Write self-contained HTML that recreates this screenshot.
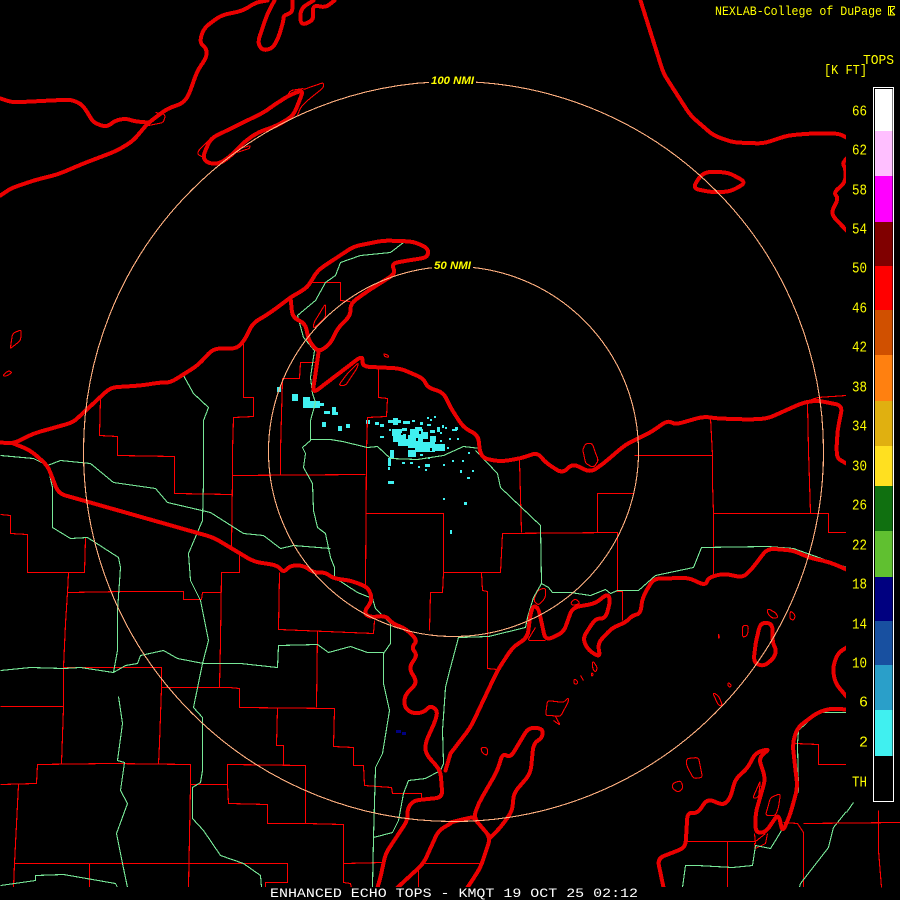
<!DOCTYPE html>
<html><head><meta charset="utf-8"><title>Enhanced Echo Tops KMQT</title>
<style>
html,body{margin:0;padding:0;background:#000;width:900px;height:900px;overflow:hidden}
svg{display:block}
.k{fill:none;stroke:#ea0000;stroke-width:4;stroke-linejoin:round;stroke-linecap:round}
.r{fill:none;stroke:#ff0000;stroke-width:1.1}
.g{fill:none;stroke:#78e898;stroke-width:1.1}
.c{fill:none;stroke:#ffb080;stroke-width:1.1}
.y{fill:#ffff00;font-family:"Liberation Mono",monospace;font-size:15px}
.y2{fill:#ffff00;font-family:"Liberation Mono",monospace;font-size:14px}
.n{fill:#ffff00;font-family:"Liberation Sans",sans-serif;font-size:11px;font-weight:bold;font-style:italic}
</style></head><body>
<svg width="900" height="900" viewBox="0 0 900 900" xmlns="http://www.w3.org/2000/svg">
<defs><clipPath id="m"><rect x="0" y="0" width="846" height="887"/></clipPath></defs>
<rect width="900" height="900" fill="#000"/>
<g clip-path="url(#m)">
<g shape-rendering="crispEdges">
<path fill="#40f0f0" d="M292 394h6v7h-6zM277 387h4v5h-4zM303 397h7v11h-7zM303 401h17v7h-17zM318 403h6v3h-6zM324 411h6v3h-6zM332 407h4v8h-4zM335 412h3v3h-3zM322 422h4v5h-4zM338 426h4v5h-4zM346 424h4v4h-4zM366 420h4v4h-4zM375 422h4v3h-4zM380 424h4v3h-4zM388 420h13v3h-13zM393 418h5v7h-5zM403 421h7v3h-7zM412 420h3v2h-3zM420 422h3v3h-3zM427 417h2v2h-2zM430 419h2v2h-2zM434 416h2v2h-2zM427 424h4v2h-4zM389 429h2v2h-2zM392 429h10v7h-10zM393 434h13v8h-13zM402 428h5v3h-5zM410 429h13v10h-13zM415 427h7v3h-7zM398 439h10v7h-10zM408 435h15v13h-15zM415 442h20v10h-20zM423 432h5v7h-5zM430 430h5v3h-5zM437 427h3v5h-3zM442 425h2v3h-2zM430 436h6v6h-6zM432 444h13v7h-13zM408 450h8v7h-8zM390 450h4v8h-4zM455 427h3v3h-3zM452 429h5v2h-5zM440 432h2v2h-2zM445 427h2v2h-2zM449 438h2v2h-2zM457 438h2v2h-2zM440 440h2v2h-2zM447 447h2v2h-2zM380 436h4v2h-4zM425 464h5v3h-5zM420 454h3v2h-3zM428 457h2v2h-2zM402 462h3v2h-3zM410 462h3v2h-3zM418 466h2v2h-2zM425 469h2v2h-2zM443 464h2v2h-2zM452 460h2v2h-2zM462 460h2v2h-2zM468 452h2v2h-2zM460 470h2v3h-2zM472 470h2v2h-2zM467 477h3v2h-3zM388 458h3v8h-3zM388 467h2v3h-2zM388 481h6v3h-6zM443 498h2v2h-2zM464 502h3v3h-3zM450 530h2v4h-2z"/>
<path fill="#000" d="M401 433h2v2h-2zM419 431h2v3h-2zM416 438h2v3h-2zM430 448h2v3h-2z"/>
<path fill="#000080" d="M396 730h5v3h-5zM402 732h4v3h-4z"/>
</g>

<g shape-rendering="crispEdges" transform="translate(.5 .5)">
<!-- county lines -->
<g class="r">
<polyline points="243,340 243,397 253,397 253,416 233,417 232,450 232,475 231,547"/>
<polyline points="100,397 99,435 117,436 117,455 174,456 174,493 231,494"/>
<polyline points="312,282 340,282 340,300 350,301"/>
<polyline points="317,362 300,362 299,378 282,378 280,450 280,474"/>
<polyline points="378,367 378,397 387,398 386,416 367,417 366,450 365,587"/>
<polyline points="232,475 365,474"/>
<polyline points="0,514 10,515 10,533 27,534 27,572 84,572 85,537"/>
<polyline points="68,572 67,592 65,623 63,667 63,707 61,763"/>
<polyline points="67,592 125,591 183,591 183,599 201,599 202,592 221,592"/>
<polyline points="239,555 239,572 221,572 220,640 219,687"/>
<polyline points="63,667 161,667 161,687 159,743 158,764"/>
<polyline points="161,687 229,687 239,688 239,707 334,708 333,746 353,747 353,765 363,765 364,785 391,787 392,793 421,793 421,798"/>
<polyline points="277,707 276,745 283,745 283,764"/>
<polyline points="0,706 63,706"/>
<polyline points="279,572 278,629 373,633 374,620"/>
<polyline points="317,630 316,707"/>
<polyline points="0,784 36,783 37,764 110,763 190,764 190,784 188,887"/>
<polyline points="18,784 14,863 13,887"/>
<polyline points="190,784 227,784 227,764 305,765 305,823 343,824 343,882 350,883 351,887"/>
<polyline points="227,784 228,803 267,804 267,823 305,823"/>
<polyline points="14,863 287,863 287,882 265,882 265,887"/>
<polyline points="89,863 89,887"/>
<polyline points="343,863 383,862"/>
<polyline points="418,870 418,887"/>
<polyline points="423,863 480,863"/>
<polyline points="365,513 443,513 443,572 442,592 430,592 429,630"/>
<polyline points="443,572 500,572 502,533 617,532 617,590"/>
<polyline points="519,460 521,532"/>
<polyline points="634,455 712,455 712,483 713,513 713,575"/>
<polyline points="710,417 712,455"/>
<polyline points="807,403 808,450 810,513"/>
<polyline points="597,532 597,493 634,493"/>
<polyline points="481,572 482,590 487,591 487,668 497,669"/>
<polyline points="616,591 622,591 622,620"/>
<polyline points="713,513 828,513 828,532 846,532"/>
<polyline points="795,743 818,744 818,764 846,764"/>
<polyline points="687,841 755,841 765,833"/>
<polyline points="727,841 727,887"/>
<polyline points="783,822 797,823 803,832 803,887"/>
<polyline points="754,833 755,843 754,843 755,848 765,843 767,833"/>
</g>
<!-- thin lake / island outlines -->
<g class="r s">
<polyline points="210,138 198,150 197,154 203,157"/>
<polyline points="243,147 250,145 249,148 233,153"/>
<polyline points="303,89 323,82 323,87 307,100 300,107 297,115"/>
<polyline points="287,95 290,90 303,88"/>
<polyline points="155,112 165,114 163,122 148,125"/>
<polyline points="803,402 817,397 846,395"/>
<polygon points="10,347 12,333 21,329 20,340 10,348"/>
<polygon points="2,375 8,370 12,372 5,376"/>
<polygon points="338,385 347,373 358,362 357,367 345,385"/>
<polygon points="313,323 325,303 325,317 313,328"/>
<polygon points="383,353 388,355 388,357 384,356"/>
<polygon points="582,450 585,443 592,443 594,450 598,460 593,467 585,463 583,452"/>
<polygon points="537,590 545,587 545,597 538,605 533,600"/>
<polygon points="570,602 575,598 580,603 572,605"/>
<polygon points="790,610 795,615 793,620 789,618"/>
<polygon points="767,608 775,612 778,617 772,618 767,613"/>
<polygon points="742,625 748,625 747,635 742,637"/>
<polygon points="718,633 719,637 718,638"/>
<polygon points="728,682 731,685 729,687 727,684"/>
<polygon points="712,692 718,695 722,705 718,705"/>
<polygon points="686,758 698,757 700,767 702,777 693,778 686,765"/>
<polygon points="672,783 680,780 683,787 678,792 672,788"/>
<polygon points="547,700 563,702 568,697 568,701 560,716 550,715 545,715"/>
<polygon points="592,660 597,667 595,672 592,668"/>
<polygon points="574,678 578,682 575,684 573,682"/>
<polyline points="580,675 583,680"/>
<polygon points="591,672 593,674 591,676"/>
<polygon points="480,747 487,747 487,755 482,753"/>
<polygon points="770,797 780,793 778,807 775,815 765,815"/>
<polygon points="760,780 752,798 758,797"/>
<polyline points="553,720 560,725 555,716"/>
<polyline points="535,627 527,640 545,640"/>
</g>

<!-- rivers / state -->
<g class="g">
<polyline points="403,242 390,252 360,255 340,262 335,275 325,282 315,300 297,315 303,337 314,350 310,377 312,393 315,402 310,420 310,440 302,447 305,453 303,467 312,483 313,510 317,527 325,533 330,557 334,567 334,577 357,592 372,598 375,608 390,623 390,643 383,653 383,683 389,710 382,753 375,767 373,837 372,887"/>
<polyline points="310,439 330,439 342,441 367,447 377,446 390,458 417,459 443,455 463,446 480,448"/>
<polyline points="475,450 497,473 500,487 540,525 541,583 533,597 527,617 525,627 488,636 458,637 450,667 445,687 442,730 443,763 440,770 425,778 408,780 403,793 398,820 392,832 373,837"/>
<polyline points="541,583 548,587 552,592 570,592 590,595 605,589 610,593 617,590 638,590 655,575 693,567 701,547 767,546 793,548 846,567"/>
<polyline points="846,712 817,712 798,730 797,743 798,790 787,820 775,840 770,848 755,845 752,865 732,867 697,865 685,865 682,887"/>
<polyline points="853,802 833,827 828,847 800,883 799,887"/>
<polyline points="0,455 33,458 47,465 60,460 90,463 113,482 155,488 167,502 210,512 243,533 263,535 280,548 293,545 330,548"/>
<polyline points="47,465 52,487 52,527 70,538 87,537 118,557 120,567 117,610 117,650 113,672"/>
<polyline points="0,670 30,667 63,668 80,667 113,672 125,665 137,663 140,655 163,650 177,658 203,663 240,663 277,667 278,645 317,644 328,652 350,646 367,652 383,652"/>
<polyline points="183,375 193,393 208,407 203,420 203,480 202,520 188,553 190,580 200,600 208,640 202,663 193,707 202,717 202,770 200,782 192,787 192,818 203,830 220,855 243,863 260,875 261,887"/>
<polyline points="118,696 122,723 117,760 124,762 120,790 127,803 116,833 122,863 127,887"/>
<polyline points="0,885 35,880 35,875 63,874 115,883 117,887"/>
</g>

<!-- thick coast lines -->
<g class="k s">
<polyline points="0,98 12,102 50,100 70,99 80,103 86,110 92,121 100,125 107,126 115,120 125,118 135,121 148,122"/>
<polyline points="0,195 10,188 33,180 57,174 83,163 117,150 133,140 147,123 167,108 182,103 188,95 197,70 206,57 206,48 199,42 203,28 220,15 243,10 255,2 267,0"/>
<polyline points="274,0 267,13 257,42 262,50 272,48 278,37 283,20 283,15 292,12 292,0"/>
<polyline points="334,0 325,7 315,5 312,8 313,20 300,25 300,8 313,0"/>
<polygon points="210,138 202,157 208,163 220,163 233,153 243,142 257,132 277,125 293,115 303,90 295,92 285,97 270,107 263,112"/>
<polyline points="0,442 13,443 33,433 72,422 80,415 110,387 140,385 160,382 170,382 197,365 213,348 237,348 245,338 252,323 270,312 290,297"/>
<polyline points="290,297 307,287 317,270 353,246 383,240 413,241 428,248 427,257 407,260 391,263 395,273 368,290 350,303 350,315 337,328 330,343 318,352 308,340 305,323 292,317 290,297"/>
<polyline points="318,352 315,373 312,393 362,355 362,366 400,368 423,378 427,387 443,392 450,407 463,427 478,435 479,450 483,458 500,461 520,458 537,452 545,462 562,473 572,463 590,472 603,463 618,450 627,443 650,432 667,420 675,424 703,416 717,418 750,419 767,418 803,402 817,400 842,405 837,430 836,450 837,458 846,463"/>
<polyline points="846,158 842,163 845,168 845,182 833,192 838,198 830,213 846,230"/>
<polyline points="640,0 663,73 690,115 713,135 733,142 763,143 787,135 810,133 838,133 846,137"/>
<polygon points="692,188 700,175 708,171 728,172 746,182 730,191 713,192"/>
<polyline points="13,443 30,450 47,465 58,493 213,537 253,561 277,565 283,572 290,565 303,565 313,572 325,572 333,578 350,580 368,587 372,600 363,612 370,617 385,615 392,623 405,628 417,640 411,647 417,655 408,667 417,682 404,695 404,707 412,713 423,712 430,705 437,710 435,720 425,742 425,753 440,770 442,797 413,800 407,808 407,820 385,853 380,877 377,887"/>
<polyline points="450,823 438,830 423,863 397,887"/>
<polyline points="450,753 470,727 497,670 512,647 527,637 530,613 533,605 538,608 545,640 563,632 572,607 595,603 607,593 610,600 605,618 595,618 582,638 588,650 600,657 597,643 612,627 625,622 632,615 640,613 642,597 653,578 668,578 687,577 705,585 708,577 723,573 742,577 750,570 767,548 793,550 808,557 830,562 846,569"/>
<polyline points="450,753 445,770"/>
<polyline points="450,822 470,817 473,817 490,837 480,867 467,887"/>
<polyline points="490,837 473,817 478,803 497,770 502,753 510,757 528,727 542,728 542,737 533,743 530,773 513,793 512,810 500,827 490,837"/>
<polygon points="760,622 772,623 772,642 776,650 773,658 763,666 753,662 755,643"/>
<polyline points="846,647 837,653 832,668 835,683 846,696"/>
<polyline points="663,887 657,858 685,847 687,812 697,813 707,798 723,805 730,797 735,778 747,768 755,752 770,748 758,757 765,778 755,813 755,832 765,832 778,813 782,832 790,813 797,787 792,743 797,727 817,712 830,708 846,709"/>
</g>
</g>

<!-- range rings -->
<g transform="translate(.5 .5)" shape-rendering="crispEdges">
<circle class="c" cx="453" cy="451" r="370"/>
<circle class="c" cx="453" cy="451" r="185"/>
</g>
</g>

<!-- lines right of map -->
<g shape-rendering="crispEdges" transform="translate(.5 .5)">
<polyline class="r" points="803,823 900,822"/>
<polyline class="r" points="878,810 878,850 881,887"/>
<polyline class="g" points="846,812 853,802"/>
</g>

<rect x="429" y="74" width="47" height="12" fill="#000"/>
<text class="n" x="431" y="84" textLength="43" lengthAdjust="spacingAndGlyphs">100 NMI</text>
<rect x="432" y="259" width="41" height="12" fill="#000"/>
<text class="n" x="434" y="269" textLength="37" lengthAdjust="spacingAndGlyphs">50 NMI</text>

<!-- colour bar -->
<rect x="873.5" y="87.500" width="20" height="714" fill="#000" stroke="#fff" stroke-width="1"/>
<rect x="875" y="89" width="17.500" height="42" fill="#fff"/>
<rect x="875" y="131" width="17.500" height="45" fill="#ffbfff"/>
<rect x="875" y="176" width="17.500" height="46" fill="#ff00ff"/>
<rect x="875" y="222" width="17.500" height="44" fill="#800000"/>
<rect x="875" y="266" width="17.500" height="44" fill="#ff0000"/>
<rect x="875" y="310" width="17.500" height="45" fill="#d05000"/>
<rect x="875" y="355" width="17.500" height="46" fill="#ff8010"/>
<rect x="875" y="401" width="17.500" height="45" fill="#e0b010"/>
<rect x="875" y="446" width="17.500" height="40" fill="#ffe020"/>
<rect x="875" y="486" width="17.500" height="45" fill="#107010"/>
<rect x="875" y="531" width="17.500" height="46" fill="#60c030"/>
<rect x="875" y="577" width="17.500" height="44" fill="#000080"/>
<rect x="875" y="621" width="17.500" height="44" fill="#1850a0"/>
<rect x="875" y="665" width="17.500" height="45" fill="#2a9fc9"/>
<rect x="875" y="710" width="17.500" height="46" fill="#40f0f0"/>

<g class="y">
<text x="852" y="115.500" textLength="15" lengthAdjust="spacingAndGlyphs">66</text>
<text x="852" y="154.500" textLength="15" lengthAdjust="spacingAndGlyphs">62</text>
<text x="852" y="194.500" textLength="15" lengthAdjust="spacingAndGlyphs">58</text>
<text x="852" y="233.500" textLength="15" lengthAdjust="spacingAndGlyphs">54</text>
<text x="852" y="272.500" textLength="15" lengthAdjust="spacingAndGlyphs">50</text>
<text x="852" y="312.500" textLength="15" lengthAdjust="spacingAndGlyphs">46</text>
<text x="852" y="351.500" textLength="15" lengthAdjust="spacingAndGlyphs">42</text>
<text x="852" y="391.500" textLength="15" lengthAdjust="spacingAndGlyphs">38</text>
<text x="852" y="430.500" textLength="15" lengthAdjust="spacingAndGlyphs">34</text>
<text x="852" y="470.500" textLength="15" lengthAdjust="spacingAndGlyphs">30</text>
<text x="852" y="509.500" textLength="15" lengthAdjust="spacingAndGlyphs">26</text>
<text x="852" y="549.500" textLength="15" lengthAdjust="spacingAndGlyphs">22</text>
<text x="852" y="588.500" textLength="15" lengthAdjust="spacingAndGlyphs">18</text>
<text x="852" y="628.500" textLength="15" lengthAdjust="spacingAndGlyphs">14</text>
<text x="852" y="667.500" textLength="15" lengthAdjust="spacingAndGlyphs">10</text>
<text x="859" y="706.500">6</text>
<text x="859" y="746.500">2</text>
<text x="852" y="786.500" textLength="15" lengthAdjust="spacingAndGlyphs">TH</text>
</g>
<g class="y2">
<text x="863" y="64" textLength="31" lengthAdjust="spacingAndGlyphs">TOPS</text>
<text x="824" y="74" textLength="43" lengthAdjust="spacingAndGlyphs">[K FT]</text>
<text x="715" y="15" style="font-size:12.500px" textLength="167" lengthAdjust="spacingAndGlyphs">NEXLAB-College of DuPage</text>
</g>
<path d="M895 6.500H888.500V15H895M890.500 6.500V15M895 7.500L891 11L895 15" fill="none" stroke="#ffff00" stroke-width="1"/>

<text x="270" y="897" fill="#fff" font-family="'Liberation Mono',monospace" font-size="13" textLength="368" lengthAdjust="spacingAndGlyphs">ENHANCED ECHO TOPS - KMQT 19 OCT 25 02:12</text>
</svg>
<script>
/* round the coastline corners: replace each vertex with a short curve */
(function(){
  var els=document.querySelectorAll('.s polyline,.s polygon');
  for(var i=0;i<els.length;i++){
    var e=els[i],closed=e.tagName==='polygon',ns='http://www.w3.org/2000/svg';
    var p=e.getAttribute('points').trim().split(/\s+/).map(function(s){return s.split(',').map(Number)});
    if(p.length<3)continue;
    var n=p.length,d='',pt=function(a,b,c){var l=Math.hypot(b[0]-a[0],b[1]-a[1])||1,t=Math.min(c,l*0.45)/l;return [a[0]+(b[0]-a[0])*t,a[1]+(b[1]-a[1])*t]};
    var cut=e.parentNode.classList.contains('k')?7:3;
    for(var j=0;j<n;j++){
      var a=p[(j-1+n)%n],b=p[j],c=p[(j+1)%n];
      if(!closed&&(j===0||j===n-1)){d+=(j?'L':'M')+b[0]+' '+b[1];continue}
      var s=pt(b,a,cut),f=pt(b,c,cut);
      d+=(d?'L':'M')+s[0].toFixed(1)+' '+s[1].toFixed(1)+'Q'+b[0]+' '+b[1]+' '+f[0].toFixed(1)+' '+f[1].toFixed(1);
    }
    if(closed)d+='Z';
    var q=document.createElementNS(ns,'path');q.setAttribute('d',d);e.parentNode.replaceChild(q,e);
  }
})();
</script>
</body></html>
